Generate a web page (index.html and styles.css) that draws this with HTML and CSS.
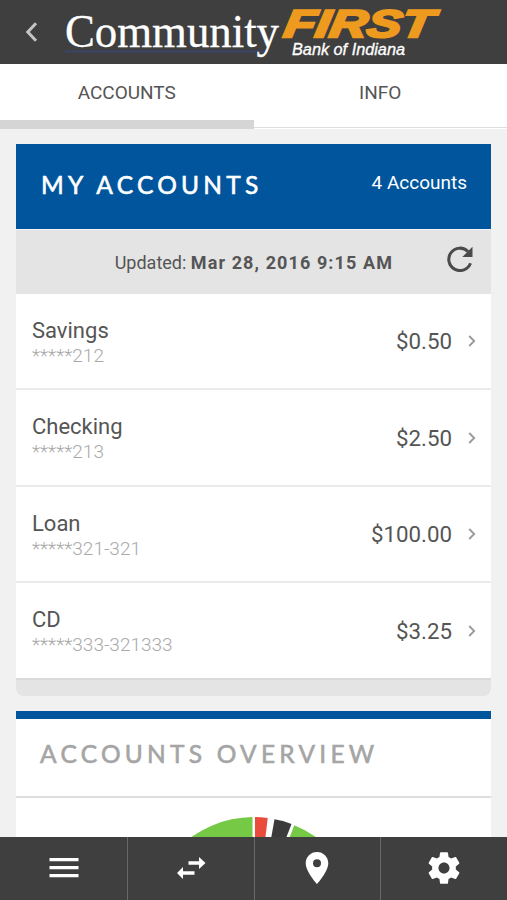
FILE: index.html
```html
<!DOCTYPE html>
<html lang="en">
<head>
    <meta charset="UTF-8">
    <meta name="viewport" content="width=device-width, initial-scale=1.0">
    <title>Community First Bank of Indiana</title>
    <link rel="stylesheet" href="styles.css">
</head>
<body>

    <header class="header">
        <svg class="back" width="14" height="20" viewBox="0 0 14 20"><path d="M12 1.300 3.800 10l8.200 8.700" /></svg>
        <svg class="logo" width="390" height="64" viewBox="0 0 390 64">
            <path class="logo-line" d="M6 51.5H206" />
            <text class="logo-community" x="6" y="47" textLength="214" lengthAdjust="spacingAndGlyphs">Community</text>
            <text class="logo-first" transform="translate(223.500 37.300) skewX(-9)" textLength="149" lengthAdjust="spacingAndGlyphs">FIRST</text>
            <text class="logo-bank" x="233" y="54.5" textLength="113" lengthAdjust="spacingAndGlyphs">Bank of Indiana</text>
        </svg>
    </header>

    <nav class="tabs">
        <a class="tab active">ACCOUNTS</a>
        <a class="tab">INFO</a>
    </nav>

    <main class="content">
        <section class="card accounts">
            <div class="card-header">
                <h2>MY ACCOUNTS</h2>
                <span class="count">4 Accounts</span>
            </div>
            <div class="updated">
                <p>Updated: <strong>Mar 28, 2016 9:15 AM</strong></p>
                <svg class="refresh" width="26" height="26" viewBox="0 0 26 26">
                    <path class="ring" d="M23.500 17.200A11.200 11.200 0 1 1 21 5.500" />
                    <path class="tip" d="M25.500 .8V11H15.300z" />
                </svg>
            </div>
            <ul class="list">
                <li>
                    <div class="account"><span class="name">Savings</span><span class="number">*****212</span></div>
                    <span class="amount">$0.50</span>
                    <svg class="arrow" width="8" height="12" viewBox="0 0 8 12"><path d="M1.2 1 6.2 6l-5 5" /></svg>
                </li>
                <li>
                    <div class="account"><span class="name">Checking</span><span class="number">*****213</span></div>
                    <span class="amount">$2.50</span>
                    <svg class="arrow" width="8" height="12" viewBox="0 0 8 12"><path d="M1.2 1 6.2 6l-5 5" /></svg>
                </li>
                <li>
                    <div class="account"><span class="name">Loan</span><span class="number">*****321-321</span></div>
                    <span class="amount">$100.00</span>
                    <svg class="arrow" width="8" height="12" viewBox="0 0 8 12"><path d="M1.2 1 6.2 6l-5 5" /></svg>
                </li>
                <li>
                    <div class="account"><span class="name">CD</span><span class="number">*****333-321333</span></div>
                    <span class="amount">$3.25</span>
                    <svg class="arrow" width="8" height="12" viewBox="0 0 8 12"><path d="M1.2 1 6.2 6l-5 5" /></svg>
                </li>
            </ul>
            <div class="card-footer"></div>
        </section>

        <section class="card overview">
            <h2>ACCOUNTS OVERVIEW</h2>
            <div class="chart">
                <svg width="216" height="216" viewBox="0 0 216 216">
                    <path fill="#76c945" d="M106.500 0V108H0A108 108 0 0 1 106.500 0z" />
                    <path fill="#e94b3c" d="M109 0Q115 0 121.700 1L116 50H109z" />
                    <path fill="#3b3b3b" d="M128.500 2.200Q137 3.500 145.500 7L129 50H120z" />
                    <path fill="#76c945" d="M148.300 8.300A108 108 0 0 1 216 108H109z" />
                </svg>
            </div>
        </section>
    </main>

    <nav class="toolbar">
        <a><svg width="30" height="22" viewBox="0 0 30 22"><path d="M.5 1h29v3.200H.5zM.5 9h29v3.200H.5zM.5 17h29v3.200H.5z" /></svg></a>
        <a><svg width="30" height="24" viewBox="0 0 30 24"><path d="M12.500 5.300H23V1l6.500 6-6.500 6V8.700H12.500zM18.500 15.300H7V11L1 17l6 6v-4.300h11.500z" /></svg></a>
        <a><svg width="24" height="34" viewBox="0 0 24 34"><path fill-rule="evenodd" d="M12 1C5.700 1 .7 5.900 .7 12.200 .7 20.500 12 33 12 33s11.300-12.500 11.300-20.800C23.300 5.900 18.300 1 12 1zm0 7.200a4 4 0 1 1 0 8 4 4 0 0 1 0-8z" /></svg></a>
        <a><svg width="38" height="38" viewBox="0 0 24 24"><path d="M19.430 12.980c.04-.32.070-.64.070-.98s-.03-.66-.07-.98l2.110-1.650c.19-.15.24-.42.120-.64l-2-3.460c-.12-.22-.39-.3-.61-.22l-2.490 1c-.52-.4-1.080-.73-1.690-.98l-.38-2.650C14.460 2.180 14.250 2 14 2h-4c-.25 0-.46.180-.49.420l-.38 2.650c-.61.250-1.170.590-1.690.98l-2.490-1c-.23-.09-.49 0-.61.220l-2 3.460c-.13.220-.07.490.12.640l2.110 1.650c-.04.320-.07.650-.07.980s.03.660.07.980l-2.110 1.650c-.19.150-.24.420-.12.640l2 3.460c.12.220.39.300.61.220l2.490-1c.52.400 1.080.730 1.690.980l.38 2.650c.03.240.24.420.49.420h4c.25 0 .46-.18.49-.42l.38-2.650c.61-.25 1.170-.59 1.690-.98l2.490 1c.23.090.49 0 .61-.22l2-3.460c.12-.22.070-.49-.12-.64l-2.110-1.650zM12 15.500c-1.930 0-3.500-1.570-3.500-3.500s1.570-3.500 3.500-3.500 3.500 1.570 3.500 3.500-1.570 3.500-3.500 3.500z" /></svg></a>
    </nav>

</body>
</html>
```
FILE: styles.css
```css
* { box-sizing: border-box; }
body { display: flex; flex-direction: column; height: 100vh; margin: 0; overflow: hidden; background: #f1f1f1; color: #555; font-family: Roboto, Arial, sans-serif; }
h2, p, ul { margin: 0; padding: 0; }
h2 { font-family: Lato, sans-serif; font-size: 24.500px; line-height: 29px; font-weight: 400; letter-spacing: 4.250px; -webkit-text-stroke: .6px; white-space: nowrap; }

.header { flex: none; display: flex; align-items: center; height: 64px; padding-left: 24px; background: #3f3f3f; }
.back { flex: none; margin-right: 21px; }
.back path { fill: none; stroke: #c4c4c4; stroke-width: 3; }
.logo-line { stroke: #3a4668; stroke-width: 2; }
.logo-community { fill: #fff; stroke: #fff; stroke-width: .3; font-family: "Liberation Serif", serif; font-size: 46px; }
.logo-first { fill: #ee9a1e; stroke: #ee9a1e; stroke-width: 2.4; font: italic bold 38.500px "Liberation Sans", sans-serif; }
.logo-bank { fill: #fff; stroke: #fff; stroke-width: .3; font: italic 16px "Liberation Sans", sans-serif; }

.tabs { flex: none; display: flex; height: 65px; background: #fff; }
.tab { flex: 1; height: 64px; line-height: 57px; border-bottom: 1px solid #ddd; text-align: center; font-size: 19px; }
.tab.active { height: 65px; border-bottom: 9px solid #d5d5d5; }

.content { flex: 1; min-height: 0; padding: 14.500px 16px 0; overflow: hidden; }
.accounts { margin-bottom: 15.500px; }
.card-header { display: flex; justify-content: space-between; height: 85.500px; padding: 26.500px 24px 0 25px; background: #00559c; color: #fff; }
.count { font-size: 19px; line-height: 26px; }
.updated { display: flex; align-items: center; justify-content: flex-end; height: 64.500px; padding: 1px 18px 0 0; border-top: 1px solid #f4f4f4; background: #e4e4e4; font-size: 18px; }
.updated strong { letter-spacing: 1.1px; }
.refresh { margin: -6px 0 0 54px; }
.refresh .ring { fill: none; stroke: #4b4b4b; stroke-width: 3; }
.refresh .tip { fill: #4b4b4b; }

.list { list-style: none; }
.list li { display: flex; align-items: center; height: 96.500px; padding: 1px 15px 0 16px; border-bottom: 2px solid #ebebeb; background: #fff; }
.list li:last-child { border-color: #dadada; }
.account { flex: 1; display: flex; flex-direction: column; padding-top: 3px; }
.name { font-size: 22px; line-height: 26px; }
.number { color: #a8a8a8; font-size: 19px; font-weight: 300; line-height: 24px; }
.amount { font-size: 22.300px; }
.arrow { margin-left: 16px; }
.arrow path { fill: none; stroke: #999; stroke-width: 1.8; }
.card-footer { height: 16px; border-radius: 0 0 8px 8px; background: #e4e4e4; }

.overview { border-top: 8px solid #00559c; background: #fff; }
.overview h2 { height: 79px; padding: 19.500px 24px 0; border-bottom: 2px solid #ddd; color: #a5a5a5; }
.chart { display: flex; justify-content: center; padding-top: 18.500px; }

.toolbar { flex: none; display: flex; height: 63.500px; padding-left: 1px; background: #3f3f3f; }
.toolbar a { flex: 1; display: flex; align-items: center; justify-content: center; border-right: 1px solid #686868; }
.toolbar a:last-child { border-right: 0; }
.toolbar svg { fill: #fff; }
```
